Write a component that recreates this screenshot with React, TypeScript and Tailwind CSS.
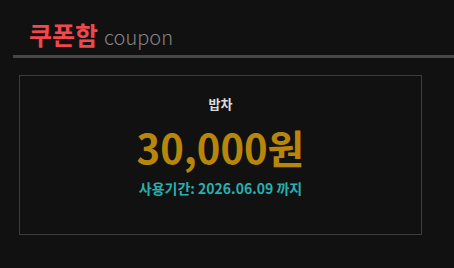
import React from 'react';

const font = { fontFamily: '"Noto Sans CJK KR", "Noto Sans", sans-serif' };

export default function App() {
  return (
    <div className="w-full h-[268px] bg-[#111111] overflow-hidden" style={font}>
      {/* Header */}
      <div className="flex items-baseline gap-[6px] pl-[29px] pt-[18px] h-[55px]">
        <h1 className="text-[25px] font-bold text-[#f2474d] leading-[32px]">쿠폰함</h1>
        <span className="text-[20px] font-light text-[#858585] leading-[32px]">coupon</span>
      </div>
      <div className="ml-[13px] h-[3px] bg-[#474747]" />

      {/* Coupon card */}
      <div className="ml-[19px] mt-[17px] w-[403px] h-[160px] border border-[#3d3d3d] flex flex-col items-center pt-[19px]">
        <div className="text-[13px] font-bold text-[#dddddd] leading-[18px]">밥차</div>
        <div className="text-[40px] font-bold text-[#b8860b] leading-[44px] mt-[12px]">30,000원</div>
        <div className="text-[14px] font-semibold text-[#27b0b0] leading-[20px] mt-[9px]">
          사용기간: 2026.06.09 까지
        </div>
      </div>
    </div>
  );
}
